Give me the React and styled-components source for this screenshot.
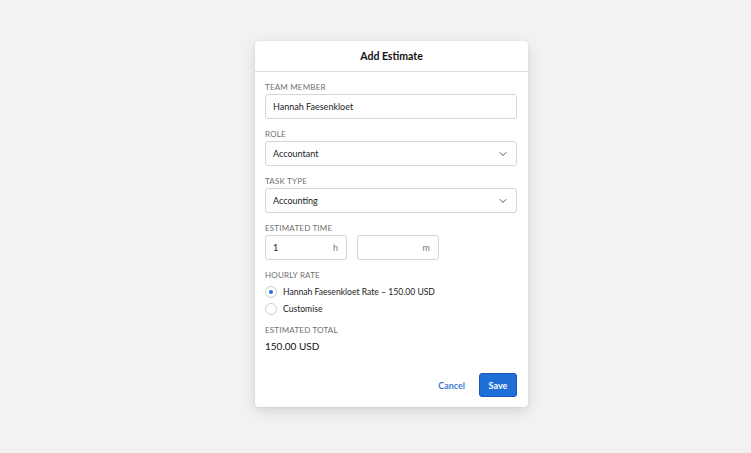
import styled, { createGlobalStyle } from 'styled-components';

const GlobalStyle = createGlobalStyle`
  html, body {
    margin: 0;
    padding: 0;
    background: #f2f2f2;
    font-family: Lato, "Open Sans", sans-serif;
    color: #222;
  }
`;

const Page = styled.div`
  width: 751px;
  height: 453px;
  display: flex;
  justify-content: center;
  padding: 41px 0 0 32px;
  box-sizing: border-box;
`;

const Modal = styled.div`
  width: 273px;
  height: 366px;
  background: #fff;
  border-radius: 4px;
  box-shadow: 0 4px 14px rgba(0, 0, 0, 0.12), 0 1px 3px rgba(0, 0, 0, 0.06);
  display: flex;
  flex-direction: column;
`;

const Header = styled.div`
  height: 30px;
  display: flex;
  align-items: center;
  justify-content: center;
  border-bottom: 1px solid #dedede;
  font-size: 10.5px;
  font-weight: 700;
  color: #111;
`;

const Body = styled.div`
  padding: 10px 11px 0 10px;
  display: flex;
  flex-direction: column;
  gap: 10px;
`;

const Field = styled.div`
  display: flex;
  flex-direction: column;
  gap: 2px;
`;

const Label = styled.div`
  font-size: 8px;
  line-height: 10px;
  letter-spacing: 0.2px;
  text-transform: uppercase;
  color: #6f6f6f;
`;

const Box = styled.div`
  height: 25px;
  box-sizing: border-box;
  width: ${(p) => p.$w || '100%'};
  border: 1px solid #d6d6d6;
  border-radius: 3px;
  display: flex;
  align-items: center;
  justify-content: space-between;
  padding: 0 8px 0 7px;
  font-size: 9px;
  color: #222;
`;

const Unit = styled.span`
  color: #777;
  font-size: 9px;
`;

const Row = styled.div`
  display: flex;
  gap: 10px;
`;

const Radios = styled.div`
  display: flex;
  flex-direction: column;
  gap: 5px;
  padding-top: 4px;
`;

const RadioRow = styled.div`
  display: flex;
  align-items: center;
  gap: 6px;
  font-size: 8.6px;
  height: 12px;
`;

const Radio = styled.span`
  width: 10px;
  height: 10px;
  border-radius: 50%;
  border: 1px solid #cdcdcd;
  display: flex;
  align-items: center;
  justify-content: center;
  &::after {
    content: '';
    width: 4px;
    height: 4px;
    border-radius: 50%;
    background: ${(p) => (p.$on ? '#1f6fd6' : 'transparent')};
  }
`;

const Total = styled.div`
  font-size: 10px;
  padding-top: 3px;
  color: #111;
`;

const Footer = styled.div`
  margin-top: auto;
  padding: 0 11px 10px 0;
  display: flex;
  justify-content: flex-end;
  align-items: center;
  gap: 14px;
`;

const LinkButton = styled.button`
  border: none;
  background: none;
  color: #2a6fd1;
  font-family: inherit;
  font-size: 9px;
  font-weight: 600;
  padding: 0;
`;

const PrimaryButton = styled.button`
  width: 38px;
  height: 24px;
  border: 1px solid #1858b8;
  border-radius: 3px;
  background: #1f6fd6;
  color: #fff;
  font-family: inherit;
  font-size: 9px;
  font-weight: 700;
  padding: 0;
`;

const Chevron = () => (
  <svg width="10" height="10" viewBox="0 0 24 24" fill="none" stroke="#333" strokeWidth="2" strokeLinecap="round" strokeLinejoin="round">
    <path d="M5 8.5l7 7 7-7" />
  </svg>
);

export default function App() {
  return (
    <>
      <GlobalStyle />
      <Page>
        <Modal>
          <Header>Add Estimate</Header>
          <Body>
            <Field>
              <Label>Team Member</Label>
              <Box>Hannah Faesenkloet</Box>
            </Field>
            <Field>
              <Label>Role</Label>
              <Box>
                Accountant
                <Chevron />
              </Box>
            </Field>
            <Field>
              <Label>Task Type</Label>
              <Box>
                Accounting
                <Chevron />
              </Box>
            </Field>
            <Field>
              <Label>Estimated Time</Label>
              <Row>
                <Box $w="82px">
                  1<Unit>h</Unit>
                </Box>
                <Box $w="82px">
                  <span />
                  <Unit>m</Unit>
                </Box>
              </Row>
            </Field>
            <Field>
              <Label>Hourly Rate</Label>
              <Radios>
                <RadioRow>
                  <Radio $on />
                  Hannah Faesenkloet Rate – 150.00 USD
                </RadioRow>
                <RadioRow>
                  <Radio />
                  Customise
                </RadioRow>
              </Radios>
            </Field>
            <Field>
              <Label>Estimated Total</Label>
              <Total>150.00 USD</Total>
            </Field>
          </Body>
          <Footer>
            <LinkButton>Cancel</LinkButton>
            <PrimaryButton>Save</PrimaryButton>
          </Footer>
        </Modal>
      </Page>
    </>
  );
}
